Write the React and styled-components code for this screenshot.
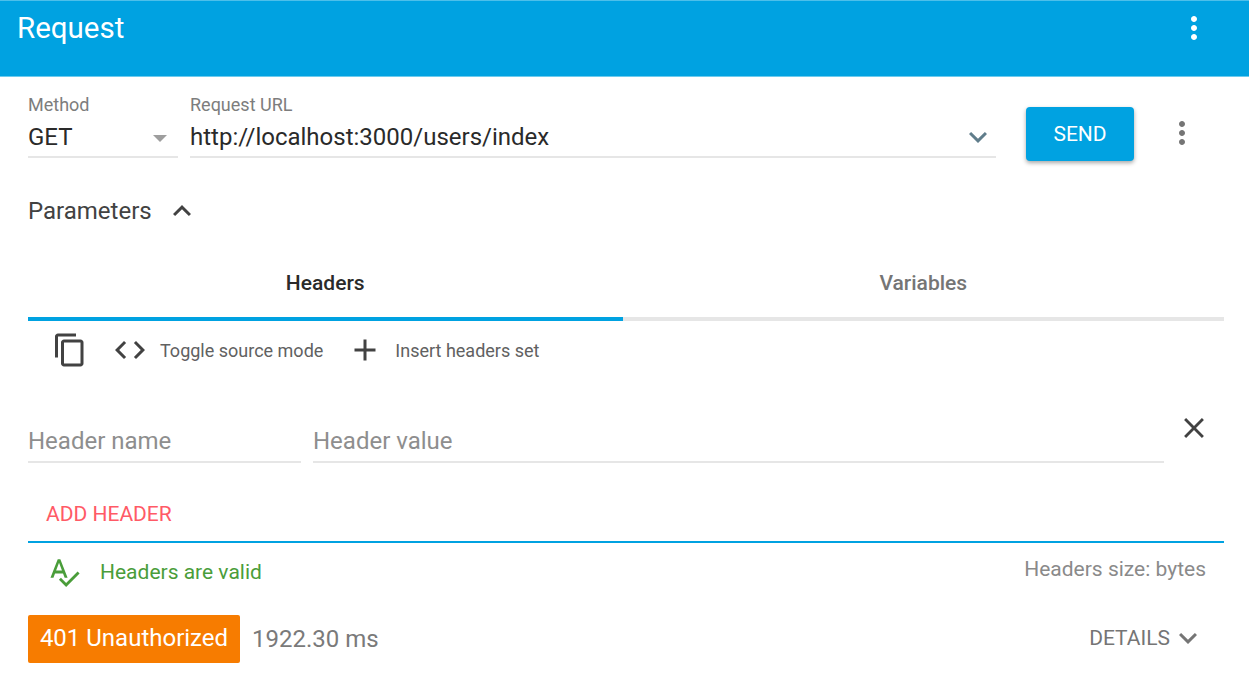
import React from "react";
import styled, { createGlobalStyle } from "styled-components";

const Global = createGlobalStyle`
  html, body { margin: 0; padding: 0; background: #fff; font-family: Roboto, "Liberation Sans", sans-serif; }
  * { box-sizing: border-box; }
`;

const P = {
  more: "M12 8c1.1 0 2-.9 2-2s-.9-2-2-2-2 .9-2 2 .9 2 2 2zm0 2c-1.1 0-2 .9-2 2s.9 2 2 2 2-.9 2-2-.9-2-2-2zm0 6c-1.1 0-2 .9-2 2s.9 2 2 2 2-.9 2-2-.9-2-2-2z",
  copy: "M16 1H4c-1.1 0-2 .9-2 2v14h2V3h12V1zm3 4H8c-1.1 0-2 .9-2 2v14c0 1.1.9 2 2 2h11c1.1 0 2-.9 2-2V7c0-1.1-.9-2-2-2zm0 16H8V7h11v14z",
  code: "M9.4 16.6L4.8 12l4.6-4.6L8 6l-6 6 6 6 1.4-1.4zm5.2 0l4.6-4.6-4.6-4.6L16 6l6 6-6 6-1.4-1.4z",
  plus: "M19 13h-6v6h-2v-6H5v-2h6V5h2v6h6v2z",
  close: "M19 6.41L17.59 5 12 10.59 6.41 5 5 6.41 10.59 12 5 17.59 6.41 19 12 13.41 17.59 19 19 17.59 13.41 12z",
  down: "M7.41 8.59L12 13.17l4.59-4.58L18 10l-6 6-6-6z",
  up: "M7.41 15.41L12 10.83l4.59 4.58L18 14l-6-6-6 6z",
  spell: "M12.45 16h2.09L9.43 3H7.57L2.46 16h2.09l1.12-3h5.64l1.14 3zm-6.02-5L8.5 5.48 10.57 11H6.43zm15.16.59l-8.09 8.09L9.83 16l-1.41 1.41 5.09 5.09L23 13l-1.41-1.41z",
};

const Svg = styled.svg`
  display: block;
  flex: none;
  width: ${(p) => p.$size || 36}px;
  height: ${(p) => p.$size || 36}px;
  fill: ${(p) => p.$color || "#424242"};
`;
const Icon = ({ d, size, color }) => (
  <Svg viewBox="0 0 24 24" $size={size} $color={color}><path d={d} /></Svg>
);

const Page = styled.div`
  width: 1249px;
  height: 681px;
  overflow: hidden;
  background: #fff;
`;
const AppBar = styled.header`
  height: 77px;
  background: #00a2e1;
  border-top: 1px solid #4dbfea;
  border-bottom: 1px solid #6ccbee;
  display: flex;
  justify-content: space-between;
  padding: 9px 37px 0 17px;
  color: #fff;
`;
const Title = styled.h1`
  margin: -1px 0 0;
  font-size: 29.5px;
  font-weight: 400;
  line-height: 38px;
`;
const Content = styled.main`
  padding: 0 25px 0 28px;
`;
const UrlRow = styled.div`
  height: 83px;
  display: flex;
  align-items: flex-start;
  padding-top: 16px;
`;
const Field = styled.div`
  width: ${(p) => (p.$grow ? "auto" : p.$w + "px")};
  flex: ${(p) => (p.$grow ? 1 : "none")};
  height: 65px;
  border-bottom: 2px solid #e6e6e6;
  margin-right: ${(p) => p.$mr || 0}px;
`;
const Label = styled.div`
  font-size: 18px;
  line-height: 24px;
  margin-bottom: 1px;
  color: #7d7d7d;
`;
const FieldLine = styled.div`
  display: flex;
  align-items: center;
  justify-content: space-between;
  height: 38px;
  font-size: 24px;
  color: #2a2a2a;
`;
const Caret = styled.span`
  width: 0;
  height: 0;
  margin-right: 11px;
  margin-top: 2px;
  border-left: 7px solid transparent;
  border-right: 7px solid transparent;
  border-top: 7px solid #9e9e9e;
`;
const SendButton = styled.button`
  width: 108px;
  height: 54px;
  margin: 14px 0 0 30px;
  background: #00a2e1;
  color: #fff;
  border: 0;
  border-radius: 4px;
  box-shadow: 0 2px 4px rgba(0, 0, 0, 0.35);
  font: 400 21px Roboto, sans-serif;
`;
const RowMore = styled.span`
  margin: 22px 24px 0 30px;
`;
const ParamRow = styled.div`
  height: 56px;
  margin-top: 23px;
  display: flex;
  align-items: center;
  gap: 12px;
  font-size: 24px;
  color: #424242;
`;
const Tabs = styled.div`
  display: flex;
  height: 80px;
  margin-top: 2px;
`;
const Tab = styled.div`
  flex: ${(p) => (p.$active ? "0 0 594.5px" : 1)};
  display: flex;
  align-items: flex-start;
  justify-content: center;
  padding-top: 27px;
  line-height: 30px;
  font-size: 21px;
  font-weight: 500;
  color: ${(p) => (p.$active ? "#2a2a2a" : "#757575")};
  border-bottom: 4px solid ${(p) => (p.$active ? "#00a2e1" : "#e6e6e6")};
`;
const Toolbar = styled.div`
  height: 58px;
  display: flex;
  align-items: center;
  padding: 0 0 0 24px;
  font-size: 18px;
  color: #616161;
`;
const ToolText = styled.span`
  margin-left: 12px;
  margin-right: ${(p) => p.$mr || 0}px;
`;
const ToolIcon = styled.span`
  margin-left: ${(p) => p.$ml || 0}px;
`;
const HeaderRow = styled.div`
  display: flex;
  height: 83px;
  padding-top: 18px;
`;
const Placeholder = styled.div`
  width: ${(p) => (p.$w ? p.$w + "px" : "auto")};
  flex: ${(p) => (p.$w ? "none" : 1)};
  height: 66px;
  padding-top: 29px;
  line-height: 30px;
  margin-right: ${(p) => p.$mr || 0}px;
  border-bottom: 2px solid #e6e6e6;
  font-size: 24px;
  color: #8e8e8e;
`;
const CloseWrap = styled.span`
  margin: 14px 13px 0 13px;
`;
const AddRow = styled.div`
  height: 81px;
  border-bottom: 2px solid #00a2e1;
  padding: 0 0 0 18px;
`;
const AddLink = styled.div`
  font-size: 21px;
  line-height: 24px;
  color: #ff5a66;
  padding-top: 40px;
  height: 64px;
`;
const ValidRow = styled.div`
  height: 56px;
  display: flex;
  align-items: center;
  justify-content: space-between;
  padding: 1px 18px 0 19px;
`;
const Valid = styled.div`
  display: flex;
  align-items: center;
  gap: 19px;
  font-size: 21px;
  color: #4a9d3a;
`;
const Size = styled.div`
  font-size: 21px;
  color: #8a8a8a;
  margin-top: -6px;
`;
const StatusRow = styled.div`
  display: flex;
  align-items: center;
  height: 48px;
  margin-top: 16px;
`;
const Badge = styled.div`
  width: 212px;
  height: 48px;
  background: #f77c00;
  border-radius: 2px;
  color: #fff;
  font-size: 24px;
  line-height: 46px;
  text-align: center;
`;
const Time = styled.div`
  margin-left: 12px;
  font-size: 24px;
  color: #7a7a7a;
`;
const Details = styled.div`
  margin-left: auto;
  margin-right: 18px;
  margin-top: -2px;
  display: flex;
  align-items: center;
  font-size: 21px;
  color: #757575;
`;

export default function App() {
  return (
    <Page>
      <Global />
      <AppBar>
        <Title>Request</Title>
        <Icon d={P.more} color="#fff" />
      </AppBar>
      <Content>
        <UrlRow>
          <Field $w={150} $mr={12}>
            <Label>Method</Label>
            <FieldLine>GET<Caret /></FieldLine>
          </Field>
          <Field $grow>
            <Label>Request URL</Label>
            <FieldLine>
              http://localhost:3000/users/index
              <Icon d={P.down} color="#607d8b" />
            </FieldLine>
          </Field>
          <SendButton>SEND</SendButton>
          <RowMore><Icon d={P.more} color="#757575" /></RowMore>
        </UrlRow>
        <ParamRow>
          Parameters
          <Icon d={P.up} color="#424242" />
        </ParamRow>
        <Tabs>
          <Tab $active>Headers</Tab>
          <Tab>Variables</Tab>
        </Tabs>
        <Toolbar>
          <Icon d={P.copy} color="#424242" />
          <ToolIcon $ml={24}><Icon d={P.code} color="#424242" /></ToolIcon>
          <ToolText $mr={24}>Toggle source mode</ToolText>
          <Icon d={P.plus} color="#424242" />
          <ToolText>Insert headers set</ToolText>
        </Toolbar>
        <HeaderRow>
          <Placeholder $w={273} $mr={12}>Header name</Placeholder>
          <Placeholder>Header value</Placeholder>
          <CloseWrap><Icon d={P.close} size={34} color="#424242" /></CloseWrap>
        </HeaderRow>
        <AddRow><AddLink>ADD HEADER</AddLink></AddRow>
        <ValidRow>
          <Valid>
            <Icon d={P.spell} size={34} color="#4a9d3a" />
            Headers are valid
          </Valid>
          <Size>Headers size: bytes</Size>
        </ValidRow>
        <StatusRow>
          <Badge>401 Unauthorized</Badge>
          <Time>1922.30 ms</Time>
          <Details>DETAILS<Icon d={P.down} color="#757575" /></Details>
        </StatusRow>
      </Content>
    </Page>
  );
}
